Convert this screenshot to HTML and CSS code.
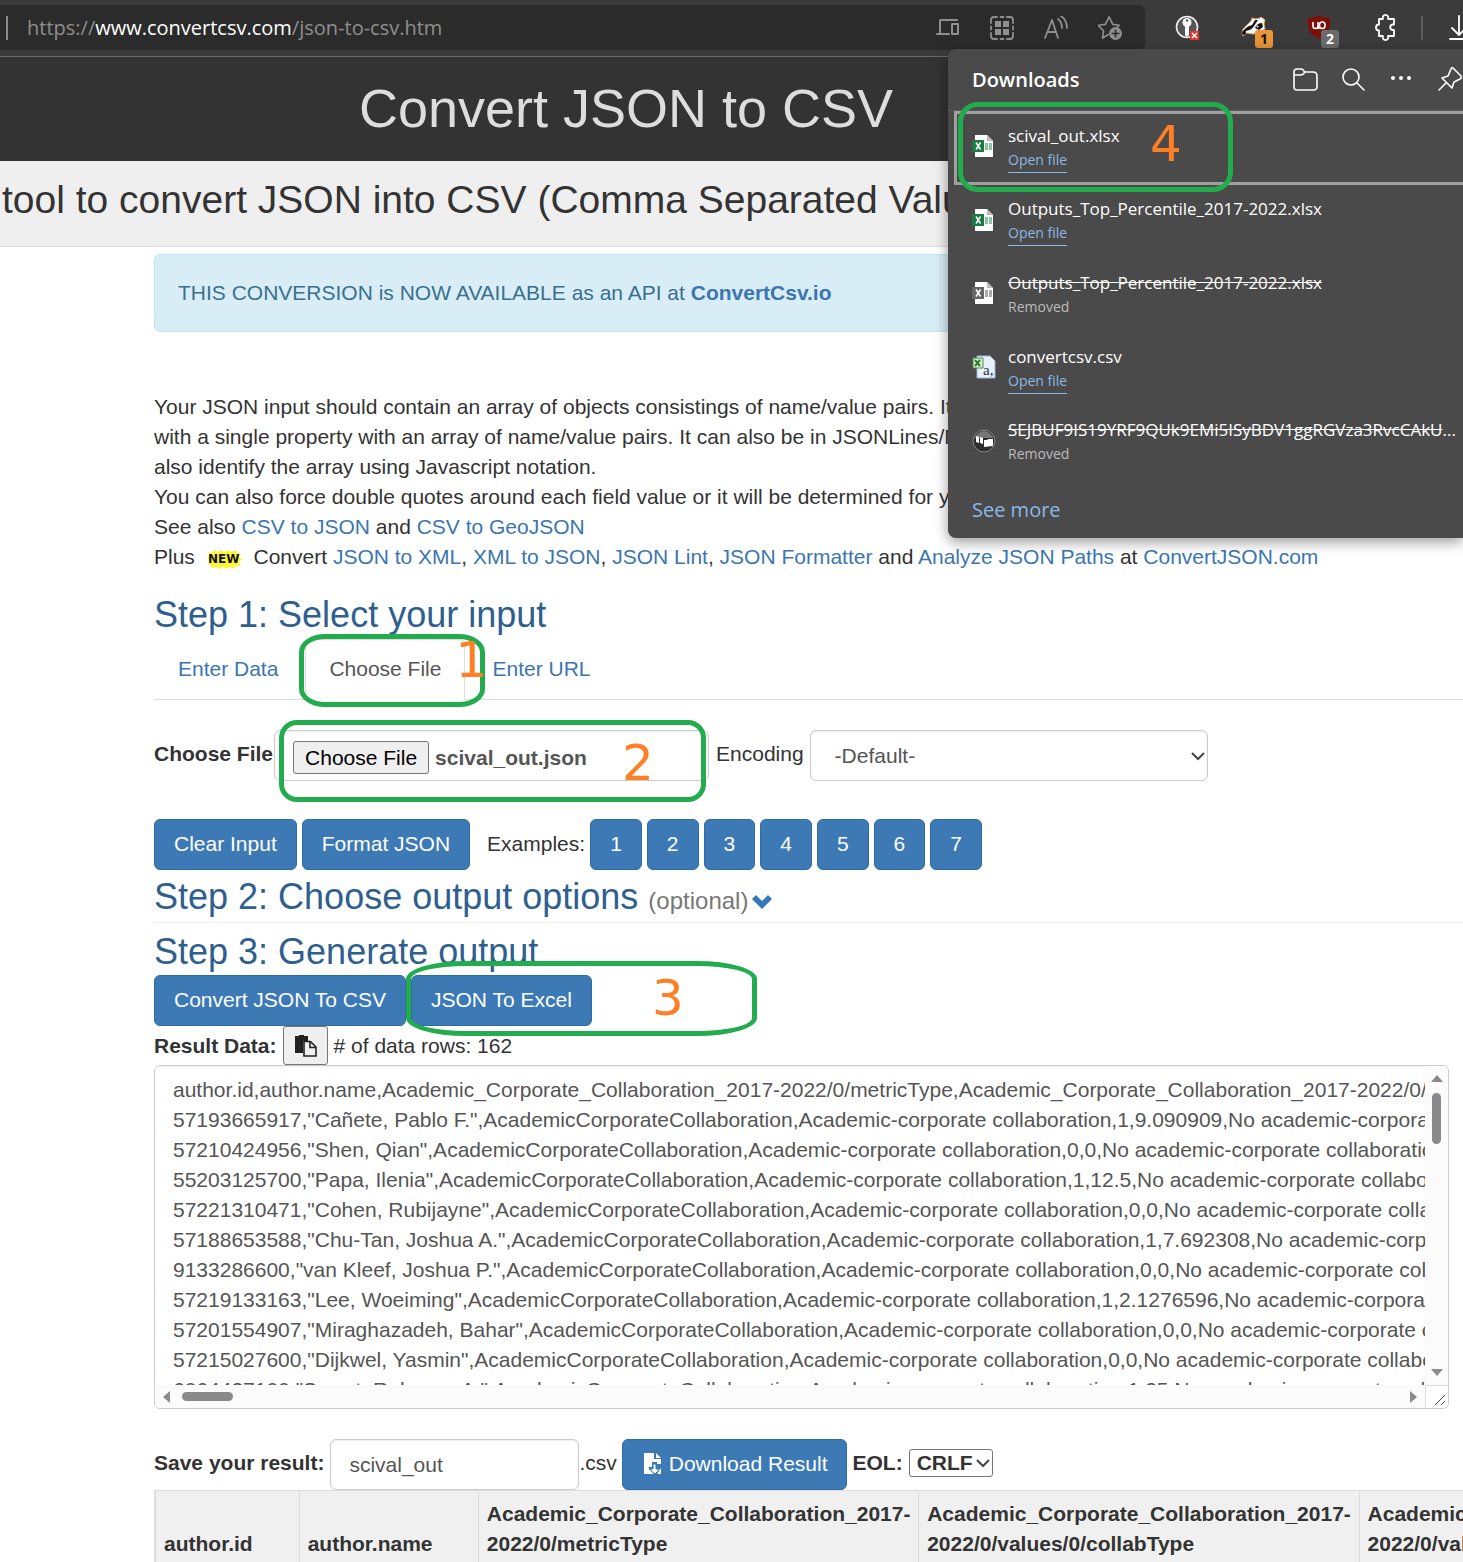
FILE: index.html
```html
<!DOCTYPE html>
<html lang="en">
<head>
<meta charset="utf-8">
<title>Convert JSON to CSV</title>
<link rel="stylesheet" href="styles.css">
</head>
<body>
<header class="toolbar">
  <div class="address">
    <span class="divider"></span>
    <span class="url">https://<b>www.convertcsv.com</b>/json-to-csv.htm</span>
    <div class="address-icons">
      <svg viewBox="0 0 24 24" class="line" stroke-width="2"><path d="M4 17V5q0-1 1-1h16M1 18h12"/><rect x="16" y="8" width="6" height="10"/></svg>
      <svg viewBox="0 0 24 24" class="line" stroke-width="1.8"><path d="M1 7V4q0-3 3-3h3M10.500 1h3M17 1h3q3 0 3 3v3M23 17v3q0 3-3 3h-3M13.500 23h-3M7 23H4q-3 0-3-3v-3M1 10.500v3M23 10.500v3"/><path class="solid" d="M5 5h6v6H5zM13 5h6v6h-6zM5 13h6v6H5zM13 13h6v6h-6z"/></svg>
      <svg viewBox="0 0 24 24" class="line" stroke-width="1.8"><path d="M1 22 8 4l6 18M4 16h8M14 3q4 3 4 9M17 0q6 4 6 12"/></svg>
      <svg viewBox="0 0 26 26" class="line" stroke-width="1.8"><path d="M11 20l-6 4 1-8-6-6 8-1 4-8 4 8 7 1-2 2"/><circle cx="19" cy="19" r="7" class="solid"/><path class="cut" d="M19 15.500v7M15.500 19h7"/></svg>
    </div>
  </div>
  <div class="extensions">
    <span class="ext"><svg viewBox="0 0 28 28"><circle cx="14" cy="13" r="10.500" fill="#555" stroke="#eee" stroke-width="1.600"/><circle cx="14" cy="8.500" r="4.500" fill="#fff"/><path d="M12 11h4v10l-2 2-2-2z" fill="#fff"/><circle cx="14" cy="6.500" r="1.200" fill="#555"/><path d="M17 17h9v9h-9z" fill="#e3342c"/><path d="M19 19l5 5m0-5-5 5" stroke="#fff" stroke-width="1.500"/></svg></span>
    <span class="ext"><svg viewBox="0 0 28 28"><path d="M3 19l1-4 8-8 1-3 4 1 4-1 1-1 4 3-1 4 1 5-6 4-6 1-6-1-4 3z" fill="#fff" stroke="#e0a060"/><path d="M4 17q4-5 9-6l3-5h3l-4 6q-2 4-8 5l-2 3zM16 14q2-5 7-5l1 4-4 3z" fill="#151515"/><circle cx="5" cy="19" r="2" fill="#151515"/><circle cx="18.500" cy="12.500" r="1" fill="#fff"/></svg><b class="badge orange">1</b></span>
    <span class="ext"><svg viewBox="0 0 28 28"><path d="M14 1q4 3 11 3v7q0 9-11 14Q3 20 3 11V4q7 0 11-3z" fill="#7d0f0b"/><path d="M8 8v4q0 2.500 2.500 2.500T13 12V8v4q0 2.500 1.500 2.500" fill="none" stroke="#fff" stroke-width="1.600"/><rect x="14.500" y="8" width="5.500" height="6.500" rx="2.700" fill="none" stroke="#fff" stroke-width="1.600"/></svg><b class="badge gray">2</b></span>
    <span class="ext"><svg viewBox="0 0 28 28" class="line white" stroke-width="1.800"><path d="M8 5h4a2.800 2.800 0 1 1 5 0h6v5.500h-1.500a2.800 2.800 0 0 0 0 5.500H23v6h-6a2.800 2.800 0 1 1-5 0H8v-5.500a2.900 2.900 0 1 1 0-6z"/></svg></span>
    <span class="divider dim"></span>
    <span class="ext"><svg viewBox="0 0 28 28" class="line white" stroke-width="1.800"><path d="M10 2v19m-7-7 7 7 7-7M1 25h18"/></svg></span>
  </div>
</header>

<div class="title-bar"><h1>Convert JSON to CSV</h1></div>
<div class="lead-bar"><p>tool to convert JSON into CSV (Comma Separated Values)</p></div>

<main class="content">
  <div class="alert">THIS CONVERSION is NOW AVAILABLE as an API at <a href="#">ConvertCsv.io</a></div>

  <div class="intro">
    <p>Your JSON input should contain an array of objects consistings of name/value pairs. It can</p>
    <p>with a single property with an array of name/value pairs. It can also be in JSONLines/Mongo</p>
    <p>also identify the array using Javascript notation.</p>
    <p>You can also force double quotes around each field value or it will be determined for you</p>
    <p>See also <a href="#">CSV to JSON</a> and <a href="#">CSV to GeoJSON</a></p>
    <p>Plus <span class="new"><svg viewBox="0 0 36 20"><path d="M2 3l4 1 2-3 4 2 3-2 3 2 4-2 3 2 5-2 1 3 4 0-2 4 3 2-3 3 2 4-5 0-2 3-4-2-4 2-3-2-4 2-3-2-5 1 0-3-4-1 3-3-3-3 3-2z"/></svg><b>NEW</b></span> Convert <a href="#">JSON to XML</a>, <a href="#">XML to JSON</a>, <a href="#">JSON Lint</a>, <a href="#">JSON Formatter</a> and <a href="#">Analyze JSON Paths</a> at <a href="#">ConvertJSON.com</a></p>
  </div>

  <h2>Step 1: Select your input</h2>
  <nav class="tabs">
    <a href="#">Enter Data</a>
    <a href="#" class="active">Choose File<span class="mark mark-1"></span><span class="num num-1">1</span></a>
    <a href="#">Enter URL</a>
  </nav>

  <div class="file-row">
    <label for="file"><b>Choose File</b></label>
    <div class="file-box">
      <input type="file" id="file" class="field">
      <span class="mark mark-2"></span><span class="num num-2">2</span>
    </div>
    <label for="enc" class="enc-label">Encoding</label>
    <span class="select enc">
      <select id="enc" class="field"><option>-Default-</option></select>
      <svg viewBox="0 0 14 10"><path d="M1 2l6 6 6-6"/></svg>
    </span>
  </div>

  <div class="button-row examples">
    <button class="btn">Clear Input</button>
    <button class="btn">Format JSON</button>
    <span class="examples-label">Examples:</span>
    <button class="btn">1</button>
    <button class="btn">2</button>
    <button class="btn">3</button>
    <button class="btn">4</button>
    <button class="btn">5</button>
    <button class="btn">6</button>
    <button class="btn">7</button>
  </div>

  <h2 class="ruled">Step 2: Choose output options <small>(optional)</small> <svg class="chevron" viewBox="0 0 20 14"><path d="M0 4l4-4 6 6 6-6 4 4-10 10z"/></svg></h2>
  <h2>Step 3: Generate output</h2>
  <div class="button-row generate">
    <button class="btn">Convert JSON To CSV</button>
    <button class="btn">JSON To Excel</button>
    <span class="mark mark-3"></span><span class="num num-3">3</span>
  </div>

  <div class="result-row">
    <label for="result"><b>Result Data:</b></label>
    <button class="copy" aria-label="Copy"><svg viewBox="0 0 22 22"><path d="M0 1h4V0h5v1h4v5H8v12H0z"/><path d="M9 6.500h6.500L21 12v9H9z" fill="#efefef" stroke="#222" stroke-width="1.600"/><path d="M15 7v5.500h6" fill="none" stroke="#222" stroke-width="1.600"/></svg></button>
    <span># of data rows: 162</span>
  </div>

  <div class="result">
    <textarea id="result" wrap="off" spellcheck="false">author.id,author.name,Academic_Corporate_Collaboration_2017-2022/0/metricType,Academic_Corporate_Collaboration_2017-2022/0/values/0/collabType
57193665917,"Cañete, Pablo F.",AcademicCorporateCollaboration,Academic-corporate collaboration,1,9.090909,No academic-corporate collaboration
57210424956,"Shen, Qian",AcademicCorporateCollaboration,Academic-corporate collaboration,0,0,No academic-corporate collaboration
55203125700,"Papa, Ilenia",AcademicCorporateCollaboration,Academic-corporate collaboration,1,12.5,No academic-corporate collaboration
57221310471,"Cohen, Rubijayne",AcademicCorporateCollaboration,Academic-corporate collaboration,0,0,No academic-corporate collaboration
57188653588,"Chu-Tan, Joshua A.",AcademicCorporateCollaboration,Academic-corporate collaboration,1,7.692308,No academic-corporate collaboration
9133286600,"van Kleef, Joshua P.",AcademicCorporateCollaboration,Academic-corporate collaboration,0,0,No academic-corporate collaboration
57219133163,"Lee, Woeiming",AcademicCorporateCollaboration,Academic-corporate collaboration,1,2.1276596,No academic-corporate collaboration
57201554907,"Miraghazadeh, Bahar",AcademicCorporateCollaboration,Academic-corporate collaboration,0,0,No academic-corporate collaboration
57215027600,"Dijkwel, Yasmin",AcademicCorporateCollaboration,Academic-corporate collaboration,0,0,No academic-corporate collaboration
6064427100,"Sweet, Rebecca A.",AcademicCorporateCollaboration,Academic-corporate collaboration,1,25,No academic-corporate collaboration</textarea>
    <div class="vbar"><i class="arrow up"></i><i class="thumb"></i><i class="arrow down"></i></div>
    <div class="hbar"><i class="arrow left"></i><i class="thumb"></i><i class="arrow right"></i></div>
    <div class="corner"><svg viewBox="0 0 12 12"><path d="M1 11 11 1M7 11l4-4"/></svg></div>
  </div>

  <div class="save-row">
    <label for="name"><b>Save your result:</b></label>
    <input type="text" id="name" class="field" value="scival_out">
    <span class="suffix">.csv</span>
    <button class="btn"><svg viewBox="0 0 18 22"><path d="M0 0h10v6h7v5h-4V9H8v5H4l6 7H0z" fill="#fff"/><path d="M12 0l5 5h-5z" fill="#fff"/><path d="M9 11h3v5h4l-5 5-6-5h4z" fill="#fff" stroke="#3d7ab5"/><path d="M17 15v6h-4z" fill="#fff"/></svg> Download Result</button>
    <label for="eol"><b>EOL:</b></label>
    <span class="select eol">
      <select id="eol"><option>CRLF</option></select>
      <svg viewBox="0 0 14 10"><path d="M1 2l6 6 6-6"/></svg>
    </span>
  </div>

  <div class="table-wrap">
    <table>
      <colgroup><col class="c1"><col class="c2"><col class="c3"><col class="c3"><col class="c3"></colgroup>
      <thead><tr>
        <th>author.id</th>
        <th>author.name</th>
        <th>Academic_Corporate_Collaboration_2017-<wbr>2022/0/metricType</th>
        <th>Academic_Corporate_Collaboration_2017-<wbr>2022/0/values/0/collabType</th>
        <th>Academic_Corporate_Collaboration_2017-<wbr>2022/0/values/0/value</th>
      </tr></thead>
    </table>
  </div>
</main>

<aside class="downloads">
  <div class="dl-head">
    <h3>Downloads</h3>
    <svg viewBox="0 0 26 26" class="line" stroke-width="1.600"><path d="M2 5q0-3 3-3h5l3 3h8q4 0 4 4v11q0 3-4 3H5q-3 0-3-3zM2 8h7q2 0 4-3"/></svg>
    <svg viewBox="0 0 26 26" class="line" stroke-width="1.600"><circle cx="11" cy="10" r="8"/><path d="M17 16l7 7"/></svg>
    <svg viewBox="0 0 26 26"><circle cx="5" cy="11" r="2" fill="#fff"/><circle cx="13" cy="11" r="2" fill="#fff"/><circle cx="21" cy="11" r="2" fill="#fff"/></svg>
    <svg viewBox="0 0 26 26" class="line" stroke-width="1.600"><path d="M17 1l8 8q1 2-1 3l-6 3-2 6L6 11l6-2 3-7q1-2 2-1M10 16l-7 7"/></svg>
  </div>
  <ul>
    <li class="current">
      <svg viewBox="0 0 24 24"><path d="M3 1h12l6 6v16H3z" fill="#fff"/><path d="M15 1v6h6z" fill="#bbb"/><path d="M13 9h3v7h-3zM17 9h3v7h-3z" fill="#8fc1a3"/><path d="M0 6h12v12H0z" fill="#1d7a45"/><path d="M4 8.500l4.500 7m0-7-4.500 7" stroke="#fff" stroke-width="1.500"/></svg>
      <div><p>scival_out.xlsx</p><a href="#">Open file</a></div>
      <span class="mark mark-4"></span><span class="num num-4">4</span>
    </li>
    <li>
      <svg viewBox="0 0 24 24"><path d="M3 1h12l6 6v16H3z" fill="#fff"/><path d="M15 1v6h6z" fill="#bbb"/><path d="M13 9h3v7h-3zM17 9h3v7h-3z" fill="#8fc1a3"/><path d="M0 6h12v12H0z" fill="#1d7a45"/><path d="M4 8.500l4.500 7m0-7-4.500 7" stroke="#fff" stroke-width="1.500"/></svg>
      <div><p>Outputs_Top_Percentile_2017-2022.xlsx</p><a href="#">Open file</a></div>
    </li>
    <li>
      <svg viewBox="0 0 24 24"><path d="M3 1h12l6 6v16H3z" fill="#fff"/><path d="M15 1v6h6z" fill="#bbb"/><path d="M13 9h3v7h-3zM17 9h3v7h-3z" fill="#aaa"/><path d="M0 6h12v12H0z" fill="#666"/><path d="M4 8.500l4.500 7m0-7-4.500 7" stroke="#fff" stroke-width="1.500"/></svg>
      <div><p><s>Outputs_Top_Percentile_2017-2022.xlsx</s></p><span>Removed</span></div>
    </li>
    <li>
      <svg viewBox="0 0 24 24"><path d="M5 1h13l5 5v17H5z" fill="#e8f0fc" stroke="#9ab4dc"/><path d="M1 3h10v10H1z" fill="#d9efd2" stroke="#4d8b45"/><path d="M3 5l5 6m0-6-5 6" stroke="#2f7d32" stroke-width="2"/><text x="11" y="20" class="csv-a">a,</text></svg>
      <div><p>convertcsv.csv</p><a href="#">Open file</a></div>
    </li>
    <li>
      <svg viewBox="0 0 24 24"><circle cx="12" cy="12" r="11" fill="#2e2e2e" stroke="#888"/><path d="M2 9q10-14 20 0z" fill="#777"/><path d="M4 7l3 1v6l-3-1zM8 8l3 1v6l-3-1zM12 11h3l1-1h5v7l-9 1z" fill="#fff"/></svg>
      <div><p><s>SEJBUF9IS19YRF9QUk9EMi5ISyBDV1ggRGVza3RvcCAkU</s>...</p><span>Removed</span></div>
    </li>
  </ul>
  <a href="#" class="more">See more</a>
</aside>
<script src="app.js"></script>
</body>
</html>
```
FILE: styles.css
```css
* { box-sizing: border-box; }
body {
  margin: 0;
  position: relative;
  overflow-x: hidden;
  background: #fff;
  color: #333;
  font: 21px/30px "Liberation Sans", Arial, sans-serif;
}
h1, h2, h3, p, ul { margin: 0; padding: 0; font-weight: 400; }
a { color: #3b76b0; text-decoration: none; }
button, input, select, textarea { font: inherit; color: inherit; margin: 0; }
svg { display: block; flex: none; }
.line { fill: none; stroke: currentColor; stroke-linejoin: round; stroke-linecap: round; }
.solid { fill: currentColor; stroke: none; }
.cut { stroke: #2b2b2b; }

/* browser toolbar */
.toolbar {
  display: flex;
  height: 57px;
  padding: 5px 0 6px;
  background: #3b3b3b;
  border-bottom: 1px solid #6a6a6a;
  overflow: hidden;
  font: 20px/28px "Open Sans", "Noto Sans", sans-serif;
}
.address {
  flex: 1;
  display: flex;
  align-items: center;
  padding: 0 23px 0 6px;
  background: #2b2b2b;
  border-radius: 0 6px 6px 0;
  color: #8f8f8f;
}
.divider { width: 2px; height: 24px; background: #8a8a8a; }
.url { margin-left: 19px; white-space: nowrap; }
.url b { color: #fff; font-weight: 400; }
.address-icons { display: flex; gap: 30px; margin-left: auto; }
.address-icons svg { width: 24px; height: 24px; }
.extensions { flex: none; width: 318px; display: flex; align-items: center; padding-left: 28px; gap: 38px; }
.ext { flex: none; position: relative; width: 28px; height: 28px; }
.white { color: #fff; }
.badge {
  position: absolute;
  left: 16px;
  top: 16px;
  width: 18px;
  height: 18px;
  border-radius: 3px;
  font-size: 14px;
  line-height: 18px;
  text-align: center;
}
.orange { background: #e8943a; color: #111; }
.gray { background: #6b6b6b; color: #fff; }
.dim { flex: none; background: #5c5c5c; margin: 0 -12px 0 -16px; }

/* page header */
.title-bar { background: #333; color: #ddd; padding: 21px 211px 23px 0; text-align: center; }
h1 { font-size: 54px; line-height: 60px; }
.lead-bar { background: #efefef; border-bottom: 1px solid #ddd; padding: 17px 0 24px 2px; overflow: hidden; white-space: nowrap; }
.lead-bar p { font-size: 39px; line-height: 44px; }

.content { padding: 7px 0 0 154px; overflow: hidden; }
.alert {
  margin-right: 14px;
  padding: 23px;
  background: #d9edf7;
  border: 1px solid #bce8f1;
  border-radius: 6px;
  color: #3a708d;
}
.alert a { font-weight: 700; }
.intro { margin: 60px 0 23px; white-space: nowrap; }
.new { position: relative; display: inline-block; width: 36px; height: 20px; margin: 0 6px 0 5px; vertical-align: top; top: 7px; text-align: center; }
.new svg { position: absolute; inset: 0; fill: #fcf53c; }
.new b { position: relative; display: block; font: 700 12px/20px "DejaVu Sans", sans-serif; color: #111; }
h2 { font-size: 36px; line-height: 40px; color: #2f5f8f; }
small { font-size: 24px; color: #777; }

.tabs { display: flex; gap: 3px; margin-top: 4px; border-bottom: 1px solid #ddd; }
.tabs a { position: relative; padding: 14px 23px 16px; border: 1px solid transparent; border-bottom: 0; margin-bottom: -1px; }
.tabs .active { color: #555; background: #fff; border-color: #ddd; border-radius: 6px 6px 0 0; }

.field {
  height: 51px;
  border: 1px solid #ccc;
  border-radius: 6px;
  background: #fff;
  box-shadow: inset 0 1px 2px rgba(0, 0, 0, .08);
  color: #555;
  padding: 0 18px;
}
.file-row { display: flex; align-items: center; margin-top: 30px; }
.file-row label, .save-row label, .suffix { padding-bottom: 4px; }
.file-box { position: relative; width: 435px; margin-left: 1px; }
.file-box .field { width: 100%; font-weight: 700; padding: 10px 18px; }
.file-box .field::file-selector-button {
  font: 21px/26px "Liberation Sans", Arial, sans-serif;
  height: 33px;
  padding: 0 11px;
  margin-right: 6px;
  color: #000;
  background: #efefef;
  border: 1px solid #767676;
  border-radius: 3px;
}
.enc-label { margin: 0 6px 0 7px; }
.select { position: relative; display: inline-flex; align-items: center; }
.select select { appearance: none; background: #fff; }
.select svg { position: absolute; right: 3px; width: 14px; height: 10px; fill: none; stroke: #444; stroke-width: 2; pointer-events: none; }
.enc { width: 398px; }
.enc select { width: 100%; padding: 0 24px; }

.button-row { display: flex; align-items: center; gap: 5px; position: relative; }
.examples { margin-top: 38px; margin-bottom: 7px; }
.examples-label { margin-left: 12px; padding-bottom: 2px; }
.btn {
  height: 51px;
  padding: 0 19px;
  border: 1px solid #2e6da4;
  border-radius: 6px;
  background: #3d7ab5;
  color: #fff;
  white-space: nowrap;
}
.btn, .copy { cursor: pointer; }
.button-row .btn { padding-bottom: 2px; }
.ruled { padding-bottom: 1px; margin-bottom: 9px; border-bottom: 1px solid #eee; }
.chevron { display: inline-block; width: 20px; height: 14px; fill: #337ab7; vertical-align: 0; margin-left: -6px; }
.generate { margin-top: 3px; }

.result-row { display: flex; align-items: center; gap: 6px; }
.copy { width: 45px; height: 39px; padding: 0 11px; border: 1px solid #767676; border-radius: 3px; background: #efefef; }
.copy svg { width: 22px; height: 22px; fill: #222; }

.result {
  display: grid;
  grid-template-columns: 1fr 23px;
  grid-template-rows: 319px 23px;
  margin-right: 14px;
  border: 1px solid #ccc;
  border-radius: 6px;
  overflow: hidden;
}
.result textarea {
  width: 100%;
  height: 100%;
  padding: 9px 0 0 18px;
  border: 0;
  resize: none;
  overflow: hidden;
  color: #555;
  background: #fff;
  box-shadow: inset 0 1px 2px rgba(0, 0, 0, .08);
}
.vbar, .hbar { display: flex; align-items: center; background: #fbfbfb; }
.vbar { flex-direction: column; padding: 9px 0; }
.hbar { padding: 0 8px; }
.thumb { background: #8a8a8a; border-radius: 5px; }
.vbar .thumb { width: 9px; height: 51px; margin: 11px 0 auto; }
.hbar .thumb { width: 51px; height: 9px; margin: 0 auto 0 12px; }
.arrow { border: 6px solid transparent; }
.up { border-top: 0; border-bottom: 7px solid #8a8a8a; }
.down { border-bottom: 0; border-top: 7px solid #8a8a8a; }
.left { border-left: 0; border-right: 7px solid #8a8a8a; }
.right { border-right: 0; border-left: 7px solid #8a8a8a; }
.corner { display: flex; justify-content: center; align-items: center; border: 1px solid #ddd; border-width: 1px 0 0 1px; padding: 6px 0 0 6px; }
.corner svg { width: 12px; height: 12px; fill: none; stroke: #444; stroke-width: 1px; }

.save-row { display: flex; align-items: center; margin-top: 30px; }
.save-row .field { width: 249px; margin: 0 0 0 6px; }
.save-row .btn { display: flex; align-items: center; gap: 7px; margin: 0 6px 0 5px; padding: 0 18px 2px 21px; }
.save-row .btn svg { width: 18px; height: 22px; }
.eol { margin: 0 0 4px 6px; }
.eol select { width: 84px; height: 28px; padding: 0 7px; line-height: 26px; border: 1px solid #767676; border-radius: 3px; font-weight: 700; }

table { width: 1646px; table-layout: fixed; border-collapse: collapse; border: 1px solid #ddd; border-left: 2px solid #ddd; background: #f0f0f0; }
.c1 { width: 144px; }
.c2 { width: 179px; }
.c3 { width: 440px; }
th { padding: 8px 7px 3px 8px; border-left: 1px solid #ddd; text-align: left; vertical-align: bottom; font-weight: 700; }

/* downloads flyout */
.downloads {
  position: absolute;
  top: 49px;
  right: 0;
  width: 515px;
  background: #4a4a4a;
  border-radius: 8px 0 0 8px;
  box-shadow: 0 4px 14px rgba(0, 0, 0, .4);
  color: #fff;
  font: 17px/25px "Open Sans", "Noto Sans", sans-serif;
}
.dl-head { display: flex; align-items: center; gap: 22px; height: 62px; padding-left: 24px; border-bottom: 1px solid #5a5a5a; overflow: hidden; }
.dl-head h3 { font-size: 20px; font-weight: 600; margin-right: auto; }
.dl-head svg { width: 26px; height: 26px; }
.dl-head svg:last-child { margin-right: 1px; }
.downloads ul { list-style: none; display: grid; grid-auto-rows: 1fr; height: 368px; }
.downloads li { position: relative; display: flex; align-items: center; gap: 12px; padding: 0 0 0 24px; white-space: nowrap; }
.downloads li svg { width: 24px; height: 24px; margin-bottom: 3px; }
.downloads li a, .downloads li div span { display: inline-block; font-size: 14px; line-height: 23px; height: 25px; color: #bbb; vertical-align: top; }
.downloads li a { color: #8ab9e6; border-bottom: 1px solid #8ab9e6; }
.downloads .current::before { content: ""; position: absolute; inset: 0 -3px 0 6px; border: 3px solid #a0a0a0; border-right: 0; }
.more { display: block; padding: 17px 24px 14px; color: #8ab9e6; font-size: 20px; line-height: 28px; }
.csv-a { font: 15px "Liberation Serif", serif; fill: #234; }

/* step callouts */
.mark { position: absolute; border: 5px solid #22ac4e; pointer-events: none; }
.num { position: absolute; font: 50px/50px "DejaVu Sans", sans-serif; color: #ff7f27; pointer-events: none; }
.mark-1 { left: -7px; top: -6px; width: 186px; height: 73px; border-radius: 26px / 18px; }
.num-1 { left: 149px; top: -5px; }
.mark-2 { left: 5px; top: -10px; width: 427px; height: 82px; border-radius: 18px; }
.num-2 { left: 348px; top: 8px; }
.mark-3 { left: 252px; top: -14px; width: 351px; height: 75px; border-radius: 60px / 18px; }
.num-3 { left: 498px; top: -2px; }
.mark-4 { left: 10px; top: -9px; width: 275px; height: 90px; border-radius: 20px; }
.num-4 { left: 202px; top: 8px; }
```
FILE: app.js
```js
const picked = new DataTransfer();
picked.items.add(new File(["[]"], "scival_out.json", { type: "application/json" }));
document.getElementById("file").files = picked.files;
```
